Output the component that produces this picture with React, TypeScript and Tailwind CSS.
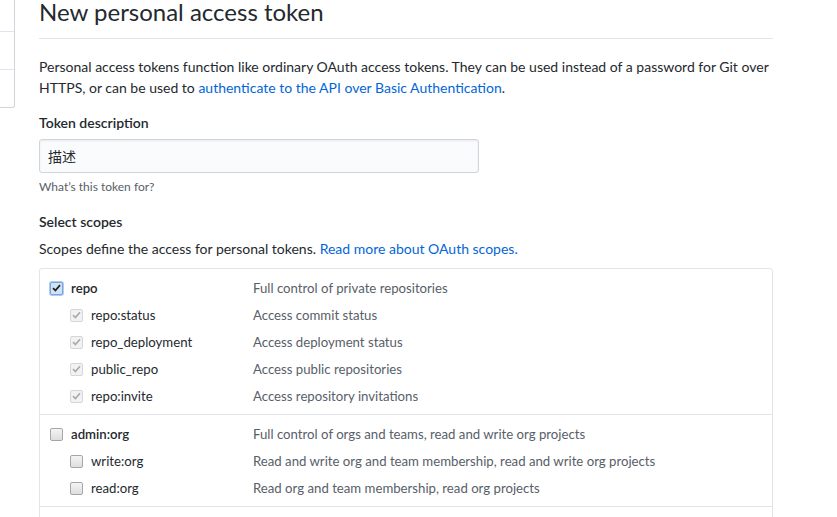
import React from "react";

type Scope = { name: string; desc: string; checked: boolean; children?: { name: string; desc: string; checked: boolean }[] };

const scopes: Scope[] = [
	{
		name: "repo",
		desc: "Full control of private repositories",
		checked: true,
		children: [
			{ name: "repo:status", desc: "Access commit status", checked: true },
			{ name: "repo_deployment", desc: "Access deployment status", checked: true },
			{ name: "public_repo", desc: "Access public repositories", checked: true },
			{ name: "repo:invite", desc: "Access repository invitations", checked: true },
		],
	},
	{
		name: "admin:org",
		desc: "Full control of orgs and teams, read and write org projects",
		checked: false,
		children: [
			{ name: "write:org", desc: "Read and write org and team membership, read and write org projects", checked: false },
			{ name: "read:org", desc: "Read org and team membership, read org projects", checked: false },
		],
	},
];

function Box({ variant }: { variant: "active" | "disabled" | "empty" }) {
	if (variant === "active") {
		return (
			<span className="flex h-[13px] w-[13px] items-center justify-center rounded-[2px] border border-[#7aa7d9] bg-[#cfe3f7] shadow-[0_0_0_1px_#aecbef]">
				<svg width="9" height="8" viewBox="0 0 9 8">
					<path d="M1 4.2 L3.4 6.5 L8 1.2" fill="none" stroke="#222" strokeWidth="1.8" />
				</svg>
			</span>
		);
	}
	if (variant === "disabled") {
		return (
			<span className="flex h-[13px] w-[13px] items-center justify-center rounded-[2px] border border-[#d6d6d6] bg-[#f2f2f2]">
				<svg width="9" height="8" viewBox="0 0 9 8">
					<path d="M1 4.2 L3.4 6.5 L8 1.2" fill="none" stroke="#a9a9a9" strokeWidth="1.6" />
				</svg>
			</span>
		);
	}
	return <span className="block h-[13px] w-[13px] rounded-[2px] border border-[#a6a6a6] bg-gradient-to-b from-[#f4f4f4] to-[#dedede]" />;
}

export default function App() {
	return (
		<div className="flex min-h-[517px] overflow-hidden bg-white font-['Lato','Noto_Sans_CJK_SC',sans-serif] text-[14px] text-[#24292e]">
			<div className="flex h-[108px] w-[15px] shrink-0 flex-col rounded-br-[3px] border-r border-b border-[#d1d5da]">
				<div className="h-[32px] border-b border-[#e1e4e8]" />
				<div className="h-[38px] border-b border-[#e1e4e8]" />
			</div>

			<main className="ml-[24px] w-[734px] shrink-0">
				<div className="-mt-[6px] border-b border-[#e1e4e8] pb-[8px]">
					<h1 className="text-[24px] leading-[36px] font-normal">New personal access token</h1>
				</div>

				<p className="mt-[17px] leading-[21px]">
					Personal access tokens function like ordinary OAuth access tokens. They can be used instead of a password for Git over HTTPS, or can be used to{" "}
					<a className="text-[#0366d6]">authenticate to the API over Basic Authentication</a>.
				</p>

				<div className="mt-[14px]">
					<label className="block font-semibold leading-[21px]">Token description</label>
					<div className="mt-[6px] flex h-[34px] w-[440px] items-center rounded-[3px] border border-[#d1d5da] bg-[#fafbfc] px-[8px] shadow-[inset_0_1px_2px_rgba(27,31,35,0.075)]">
						描述
					</div>
					<p className="mt-[5px] text-[12px] leading-[18px] text-[#586069]">What’s this token for?</p>
				</div>

				<h3 className="mt-[15px] font-semibold leading-[21px]">Select scopes</h3>
				<p className="mt-[6px] leading-[21px]">
					Scopes define the access for personal tokens. <a className="text-[#0366d6]">Read more about OAuth scopes.</a>
				</p>

				<div className="mt-[9px] rounded-[3px] border border-[#e1e4e8] text-[13.2px]">
					{scopes.map((scope) => (
						<div key={scope.name} className="border-b border-[#e1e4e8] px-[10px] pt-[9px] pb-[7px]">
							<div className="flex h-[21px] items-center">
								<div className="flex w-[203px] items-center gap-[8px]">
									<Box variant={scope.checked ? "active" : "empty"} />
									<span className="font-semibold">{scope.name}</span>
								</div>
								<span className="text-[#586069]">{scope.desc}</span>
							</div>
							{scope.children?.map((c) => (
								<div key={c.name} className="mt-[6px] flex h-[21px] items-center">
									<div className="flex w-[203px] items-center gap-[8px] pl-[20px]">
										<Box variant={c.checked ? "disabled" : "empty"} />
										<span>{c.name}</span>
									</div>
									<span className="text-[#586069]">{c.desc}</span>
								</div>
							))}
						</div>
					))}
					<div className="h-[40px]" />
				</div>
			</main>
		</div>
	);
}
